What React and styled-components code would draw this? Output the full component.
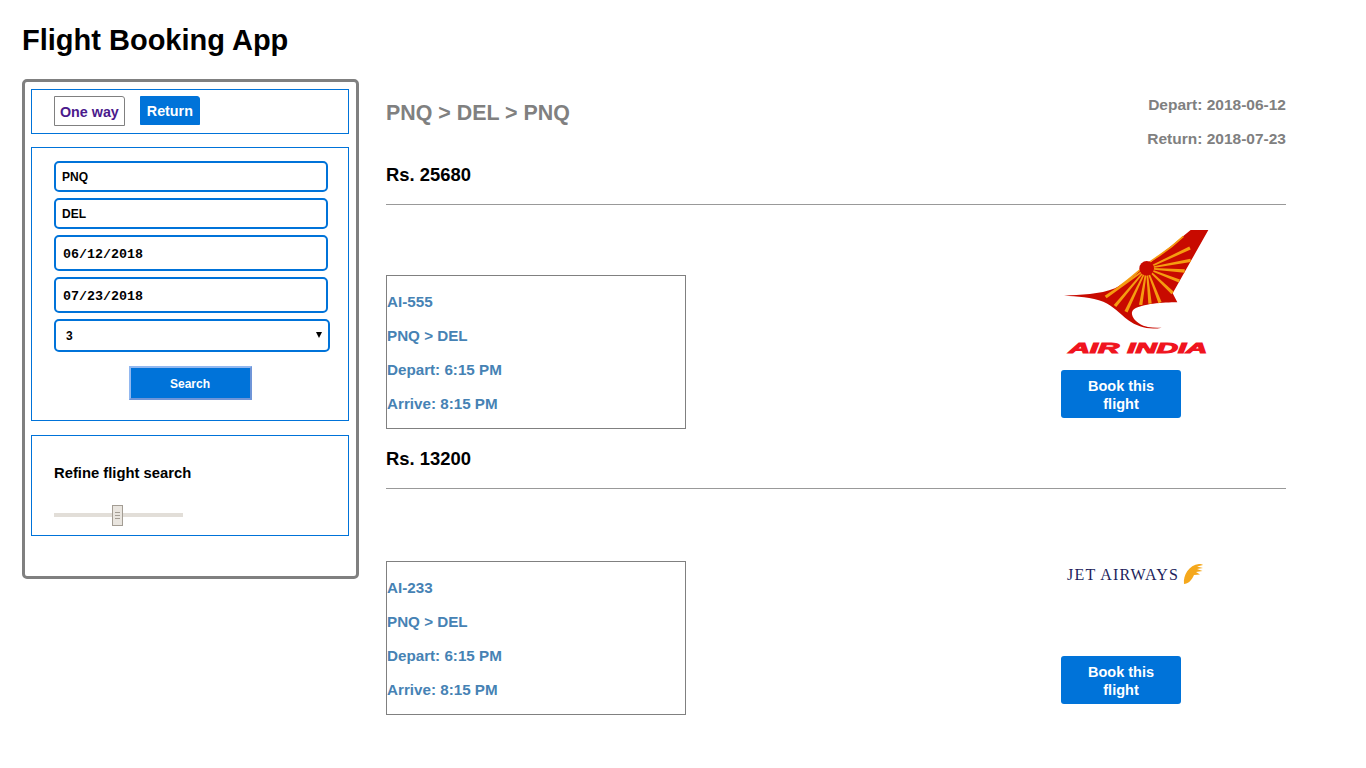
import React from 'react';
import styled, { createGlobalStyle } from 'styled-components';

const GlobalStyle = createGlobalStyle`
  html, body {
    margin: 0;
    padding: 0;
    background: #fff;
    font-family: "Liberation Sans", Arial, sans-serif;
    font-weight: 700;
    color: #000;
  }
  * { box-sizing: border-box; }
`;

const blue = '#0073d9';

const flights = [
  { id: 'AI-555', price: 'Rs. 25680', Logo: () => <AirIndiaLogo /> },
  { id: 'AI-233', price: 'Rs. 13200', Logo: () => <JetAirwaysLogo /> },
];

// end points of the sun rays on the tail
const rays = [
  [390, 69], [392, 106], [374, 138], [358, 168], [338, 204], [300, 233],
  [270, 236], [242, 240], [198, 260], [165, 243], [137, 216],
];

// a ray is a thin wedge, narrow at the sun and wider at its far end
const rayPoints = ([x, y]) => {
  const cx = 260;
  const cy = 130;
  const len = Math.hypot(x - cx, y - cy);
  const nx = (cy - y) / len;
  const ny = (x - cx) / len;
  return [
    [cx + nx * 2, cy + ny * 2],
    [x + nx * 5, y + ny * 5],
    [x - nx * 5, y - ny * 5],
    [cx - nx * 2, cy - ny * 2],
  ]
    .map((p) => p.join(','))
    .join(' ');
};

const AirIndiaLogo = () => (
  <LogoSvg viewBox="3 0 453 405" width="151" height="135">
    <path
      fill="#c80a00"
      d="M392 15 L445 15 L338 205 L352 232 C310 232 245 236 220 254 C208 266 222 290 250 302 C268 308 288 308 305 308 C270 316 232 306 205 286 C178 264 160 244 130 230 C96 216 50 214 12 212 C60 209 120 209 165 190 C205 170 240 135 280 105 C320 75 360 42 392 15 Z"
    />
    {rays.map((ray) => (
      <polygon key={ray.join()} fill="#f59c10" points={rayPoints(ray)} />
    ))}
    <path fill="none" stroke="#f59c10" strokeWidth="5" d="M178 184 C215 160 250 122 285 100 C320 78 345 58 370 34" />
    <circle cx="260" cy="130" r="22" fill="#c80a00" />
    <LogoText
      x="26"
      y="384"
      fill="#f0141e"
      stroke="#f0141e"
      strokeWidth="3"
      fontSize="42"
      fontStyle="italic"
      textLength="416"
      lengthAdjust="spacingAndGlyphs"
    >
      AIR INDIA
    </LogoText>
  </LogoSvg>
);

const JetAirwaysLogo = () => (
  <LogoSvg viewBox="0 0 148 137" width="148" height="137">
    <JetText x="6" y="71" fill="#1d1f5c" fontSize="16" textLength="111">
      JET AIRWAYS
    </JetText>
    <path
      fill="#f5a81c"
      d="M123 75 C122 66 128 56 138 55 C140 55 141 55 142 56 L136 57.5 L142 59 L136 60 L141.5 62 L135 63 L139 65.5 L133 66 C131 71 127 75 123 75 Z"
    />
  </LogoSvg>
);

const App = () => (
  <Page>
    <GlobalStyle />
    <Title>Flight Booking App</Title>
    <Main>
      <Sidebar>
        <TabBox>
          <Tab>One way</Tab>
          <Tab $active>Return</Tab>
        </TabBox>
        <SearchBox>
          <TextField defaultValue="PNQ" />
          <TextField defaultValue="DEL" />
          <DateField defaultValue="06/12/2018" />
          <DateField defaultValue="07/23/2018" />
          <SelectWrap>
            <Select defaultValue="3">
              <option value="1">1</option>
              <option value="2">2</option>
              <option value="3">3</option>
            </Select>
          </SelectWrap>
          <SearchButton>Search</SearchButton>
        </SearchBox>
        <RefineBox>
          <RefineTitle>Refine flight search</RefineTitle>
          <Track>
            <Thumb>
              <Grip />
            </Thumb>
          </Track>
        </RefineBox>
      </Sidebar>
      <Results>
        <ResultsHead>
          <Route>PNQ &gt; DEL &gt; PNQ</Route>
          <Dates>
            <DateLine>Depart: 2018-06-12</DateLine>
            <DateLine>Return: 2018-07-23</DateLine>
          </Dates>
        </ResultsHead>
        {flights.map(({ id, price, Logo }) => (
          <section key={id}>
            <Price>{price}</Price>
            <Rule />
            <FlightRow>
              <FlightInfo>
                <InfoLine>{id}</InfoLine>
                <InfoLine>PNQ &gt; DEL</InfoLine>
                <InfoLine>Depart: 6:15 PM</InfoLine>
                <InfoLine>Arrive: 8:15 PM</InfoLine>
              </FlightInfo>
              <BookColumn>
                <Logo />
                <BookButton>Book this flight</BookButton>
              </BookColumn>
            </FlightRow>
          </section>
        ))}
      </Results>
    </Main>
  </Page>
);

export default App;

const Page = styled.div`
  padding: 0 22px;
`;

const Title = styled.h1`
  margin: 0;
  height: 79px;
  padding-top: 22px;
  font-size: 29px;
  line-height: 36px;
  font-weight: 700;
`;

const Main = styled.div`
  display: flex;
  align-items: flex-start;
  gap: 27px;
`;

const Sidebar = styled.aside`
  width: 337px;
  height: 500px;
  padding: 7px 7px 7px 6px;
  border: 3px solid #808080;
  border-radius: 5px;
  display: flex;
  flex-direction: column;
  gap: 13px;
`;

const TabBox = styled.div`
  height: 45px;
  padding: 6px 22px;
  border: 1px solid ${blue};
  display: flex;
  align-items: flex-start;
  gap: 15px;
`;

const Tab = styled.button`
  height: ${(p) => (p.$active ? '29px' : '30px')};
  padding: 1px ${(p) => (p.$active ? '6px' : '5px')} 0;
  border: 1px solid ${(p) => (p.$active ? blue : '#808080')};
  border-radius: 0 3px 0 0;
  background: ${(p) => (p.$active ? blue : '#fff')};
  color: ${(p) => (p.$active ? '#fff' : '#4b1a8c')};
  font: 700 14.3px "Liberation Sans", Arial, sans-serif;
`;

const SearchBox = styled.div`
  height: 274px;
  padding: 13px 22px;
  border: 1px solid ${blue};
  display: flex;
  flex-direction: column;
  align-items: flex-start;
  gap: 6px;
`;

const TextField = styled.input`
  width: 274px;
  height: 31px;
  padding: 0 6px;
  border: 2px solid ${blue};
  border-radius: 5px;
  outline: none;
  font: 700 12px "Liberation Sans", Arial, sans-serif;
  color: #000;
`;

const DateField = styled(TextField)`
  height: 36px;
  padding: 2px 7px 0;
  font: 700 13.33px "Liberation Mono", "Courier New", monospace;
`;

const SelectWrap = styled.div`
  position: relative;
  width: 276px;
  height: 33px;

  &::after {
    content: '';
    position: absolute;
    right: 8px;
    top: 13px;
    border-left: 3px solid transparent;
    border-right: 3px solid transparent;
    border-top: 6px solid #000;
  }
`;

const Select = styled.select`
  width: 100%;
  height: 100%;
  padding: 0 10px;
  appearance: none;
  background: #fff;
  border: 2px solid ${blue};
  border-radius: 5px;
  outline: none;
  font: 700 12px "Liberation Sans", Arial, sans-serif;
  color: #000;
`;

const SearchButton = styled.button`
  align-self: center;
  width: 123px;
  height: 34px;
  margin-top: 8px;
  padding: 1px 0 0;
  border: 2px solid;
  border-color: #92b8f0 #6f95d8 #6f95d8 #92b8f0;
  background: ${blue};
  color: #fff;
  font: 700 12px "Liberation Sans", Arial, sans-serif;
`;

const RefineBox = styled.div`
  height: 101px;
  margin-top: 1px;
  padding: 28px 22px 0;
  border: 1px solid ${blue};
`;

const RefineTitle = styled.div`
  font-size: 14.8px;
  line-height: 18px;
`;

const Track = styled.div`
  position: relative;
  width: 129px;
  height: 4px;
  margin-top: 31px;
  background: #e2ded8;
`;

const Thumb = styled.div`
  position: absolute;
  left: 58px;
  top: -8px;
  width: 11px;
  height: 21px;
  border: 1px solid #a39d94;
  background: #e9e5df;
  display: flex;
  align-items: center;
  justify-content: center;
`;

const Grip = styled.div`
  width: 5px;
  height: 7px;
  border-top: 1px solid #a39d94;
  border-bottom: 1px solid #a39d94;
  background: linear-gradient(#a39d94, #a39d94) center / 100% 1px no-repeat;
`;

const Results = styled.main`
  width: 900px;
`;

const ResultsHead = styled.header`
  display: flex;
  justify-content: space-between;
  align-items: flex-start;
  height: 86px;
`;

const Route = styled.h2`
  margin: 20px 0 0;
  font-size: 21.4px;
  line-height: 28px;
  color: #808080;
`;

const Dates = styled.div`
  padding-top: 17px;
  text-align: right;
`;

const DateLine = styled.div`
  height: 34px;
  font-size: 15.5px;
  line-height: 18px;
  color: #808080;
`;

const Price = styled.div`
  height: 39px;
  font-size: 18.4px;
  line-height: 20px;
`;

const Rule = styled.hr`
  margin: 0;
  border: 0;
  border-top: 1px solid #999;
`;

const FlightRow = styled.div`
  display: flex;
  justify-content: space-between;
  align-items: flex-end;
  margin-bottom: 20px;
`;

const FlightInfo = styled.div`
  width: 300px;
  height: 154px;
  padding-top: 9px;
  border: 1px solid #808080;
`;

const InfoLine = styled.div`
  height: 34px;
  font-size: 15.2px;
  line-height: 34px;
  color: #4682b4;
`;

const BookColumn = styled.div`
  width: 225px;
  padding: 20px 0 11px;
  display: flex;
  flex-direction: column;
  gap: 10px;
`;

const LogoSvg = styled.svg`
  display: block;
`;

const LogoText = styled.text`
  font-family: "Liberation Sans", Arial, sans-serif;
  font-weight: 700;
`;

const JetText = styled.text`
  font-family: "Liberation Serif", "Times New Roman", serif;
  font-weight: 400;
`;

const BookButton = styled.button`
  width: 120px;
  height: 48px;
  padding: 2px 20px 0;
  border: 0;
  border-radius: 3px;
  background: ${blue};
  color: #fff;
  font: 700 14.5px/18px "Liberation Sans", Arial, sans-serif;
`;
